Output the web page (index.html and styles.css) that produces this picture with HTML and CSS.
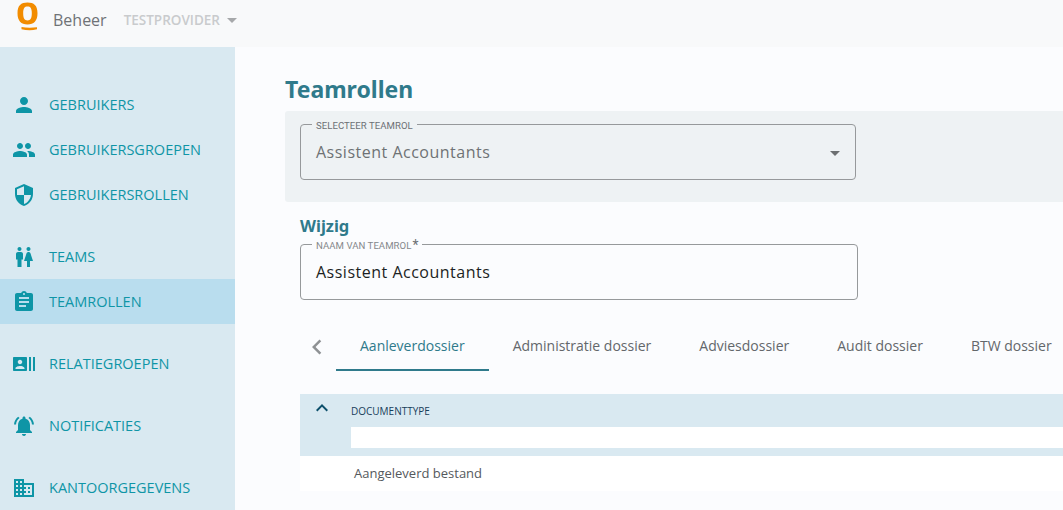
FILE: index.html
```html
<!DOCTYPE html>
<html lang="nl">
<head>
<meta charset="utf-8">
<title>Teamrollen</title>
<link rel="stylesheet" href="styles.css">
</head>
<body>
<header class="topbar">
  <svg class="logo" viewBox="0 0 22 30" width="22" height="30"><path fill="#f28c00" fill-rule="evenodd" d="M10.500 .5c6.500 0 10 2.800 10 10.800 0 7.500-3.500 11.200-10 11.200S.5 18.800.5 11.300C.5 3.300 4 .5 10.500 .5zm0 4c-3 0-4.300 1.800-4.300 6.800s1.300 7.200 4.300 7.200 4.300-2.200 4.300-7.200-1.300-6.800-4.300-6.800z"/><path fill="#f28c00" d="M4.500 25c5 .9 10.500 .9 15.500.2v2.100c-5 1.200-10.500 1.100-15.500-.1z"/></svg>
  <span class="brand">Beheer</span>
  <span class="provider">TESTPROVIDER</span>
  <span class="caret-light"></span>
</header>
<div class="shell">
  <nav class="sidebar">
    <div class="nav-group">
      <a class="nav-item"><svg viewBox="0 0 24 24"><path d="M12 12c2.210 0 4-1.790 4-4s-1.790-4-4-4-4 1.790-4 4 1.790 4 4 4zm0 2c-2.670 0-8 1.340-8 4v2h16v-2c0-2.660-5.330-4-8-4z"/></svg>GEBRUIKERS</a>
      <a class="nav-item"><svg viewBox="0 0 24 24"><path d="M16 11c1.660 0 2.990-1.340 2.990-3S17.660 5 16 5c-1.660 0-3 1.340-3 3s1.340 3 3 3zm-8 0c1.660 0 2.990-1.340 2.990-3S9.660 5 8 5C6.340 5 5 6.340 5 8s1.340 3 3 3zm0 2c-2.330 0-7 1.170-7 3.500V19h14v-2.500c0-2.330-4.670-3.500-7-3.500zm8 0c-.29 0-.62.02-.97.05 1.160.84 1.970 1.970 1.970 3.450V19h6v-2.500c0-2.330-4.670-3.500-7-3.500z"/></svg>GEBRUIKERSGROEPEN</a>
      <a class="nav-item"><svg viewBox="0 0 24 24"><path d="M12 1L3 5v6c0 5.550 3.840 10.740 9 12 5.160-1.260 9-6.450 9-12V5l-9-4zm0 10.990h7c-.53 4.120-3.280 7.790-7 8.940V12H5V6.300l7-3.110v8.800z"/></svg>GEBRUIKERSROLLEN</a>
    </div>
    <div class="nav-group">
      <a class="nav-item"><svg viewBox="0 0 24 24"><path d="M5.500 22v-7.500H4V9c0-1.100.9-2 2-2h3c1.100 0 2 .9 2 2v5.500H9.500V22h-4zM18 22v-6h3l-2.540-7.630C18.180 7.550 17.420 7 16.560 7h-.12c-.86 0-1.630.55-1.900 1.370L12 16h3v6h3zM7.500 6c1.110 0 2-.89 2-2s-.89-2-2-2-2 .89-2 2 .89 2 2 2zm9 0c1.110 0 2-.89 2-2s-.89-2-2-2-2 .89-2 2 .89 2 2 2z"/></svg>TEAMS</a>
      <a class="nav-item active"><svg viewBox="0 0 24 24"><path d="M19 3h-4.180C14.400 1.840 13.300 1 12 1c-1.300 0-2.400.84-2.820 2H5c-1.100 0-2 .9-2 2v14c0 1.100.9 2 2 2h14c1.100 0 2-.9 2-2V5c0-1.100-.9-2-2-2zm-7 0c.55 0 1 .45 1 1s-.45 1-1 1-1-.45-1-1 .45-1 1-1zm2 14H7v-2h7v2zm3-4H7v-2h10v2zm0-4H7V7h10v2z"/></svg>TEAMROLLEN</a>
    </div>
    <div class="nav-group">
      <a class="nav-item"><svg viewBox="0 0 24 24"><path d="M21 5v14h2V5h-2zm-4 14h2V5h-2v14zM14 5H2c-.55 0-1 .45-1 1v12c0 .55.45 1 1 1h12c.55 0 1-.45 1-1V6c0-.55-.45-1-1-1zM8 7.750c1.240 0 2.250 1.010 2.250 2.250S9.240 12.250 8 12.250 5.750 11.240 5.750 10 6.760 7.750 8 7.750zM12.500 17h-9v-.75c0-1.500 3-2.250 4.500-2.250s4.500.75 4.500 2.250V17z"/></svg>RELATIEGROEPEN</a>
    </div>
    <div class="nav-group">
      <a class="nav-item"><svg viewBox="0 0 24 24"><path d="M7.580 4.080L6.150 2.650C3.750 4.480 2.170 7.300 2.030 10.500h2c.15-2.650 1.510-4.970 3.550-6.420zm12.390 6.420h2c-.15-3.200-1.730-6.020-4.120-7.850l-1.420 1.430c2.020 1.450 3.390 3.770 3.540 6.420zM18 11c0-3.070-1.640-5.640-4.500-6.320V4c0-.83-.67-1.500-1.500-1.500s-1.500.67-1.500 1.500v.68C7.630 5.360 6 7.920 6 11v5l-2 2v1h16v-1l-2-2v-5zm-6 11c.14 0 .27-.01.4-.04.65-.14 1.180-.58 1.440-1.180.1-.24.15-.5.15-.78h-4c.01 1.100.9 2 2.010 2z"/></svg>NOTIFICATIES</a>
    </div>
    <div class="nav-group">
      <a class="nav-item"><svg viewBox="0 0 24 24"><path d="M12 7V3H2v18h20V7H12zM6 19H4v-2h2v2zm0-4H4v-2h2v2zm0-4H4V9h2v2zm0-4H4V5h2v2zm4 12H8v-2h2v2zm0-4H8v-2h2v2zm0-4H8V9h2v2zm0-4H8V5h2v2zm10 12h-8v-2h2v-2h-2v-2h2v-2h-2V9h8v10zm-2-8h-2v2h2v-2zm0 4h-2v2h2v-2z"/></svg>KANTOORGEGEVENS</a>
    </div>
  </nav>
  <main class="content">
    <h1 class="title">Teamrollen</h1>
    <section class="select-panel">
      <fieldset class="field field-select">
        <legend>SELECTEER TEAMROL</legend>
        <span class="value muted">Assistent Accountants</span>
        <span class="caret-dark"></span>
      </fieldset>
    </section>
    <section class="edit">
      <h2 class="subtitle">Wijzig</h2>
      <fieldset class="field field-name">
        <legend>NAAM VAN TEAMROL<span class="req">*</span></legend>
        <span class="value">Assistent Accountants</span>
      </fieldset>
      <div class="tabs">
        <svg class="tab-prev" viewBox="0 0 24 24" width="30" height="30"><path d="M15.410 7.410L14 6l-6 6 6 6 1.410-1.410L10.830 12z"/></svg>
        <span class="tab active">Aanleverdossier</span>
        <span class="tab">Administratie dossier</span>
        <span class="tab">Adviesdossier</span>
        <span class="tab">Audit dossier</span>
        <span class="tab">BTW dossier</span>
      </div>
      <div class="table">
        <div class="thead">
          <svg class="sort" viewBox="0 0 24 24" width="24" height="24"><path d="M12 8l-6 6 1.410 1.410L12 10.830l4.590 4.580L18 14z"/></svg>
          <div class="th">
            <span class="th-label">DOCUMENTTYPE</span>
            <div class="filter"></div>
          </div>
        </div>
        <div class="row">Aangeleverd bestand</div>
      </div>
    </section>
  </main>
</div>
</body>
</html>
```
FILE: styles.css
```css
* { box-sizing: border-box; }
html, body { height: 100%; }
body {
  margin: 0;
  width: 1063px;
  height: 510px;
  overflow: hidden;
  background: #fbfcfe;
  font-family: "Open Sans", sans-serif;
  display: flex;
  flex-direction: column;
}
.topbar {
  flex: 0 0 47px;
  display: flex;
  align-items: center;
  background: #f8f9fa;
  padding-left: 17px;
}
.logo { margin-top: -14px; flex: none; }
.brand { font-size: 16px; color: #6f7276; margin-left: 14px; margin-top: -8px; }
.provider { font-size: 13.5px; font-weight: 600; color: #c9cbcd; margin-left: 17px; margin-top: -8px; }
.caret-light {
  margin-left: 7px;
  margin-top: -7px;
  border-left: 5px solid transparent;
  border-right: 5px solid transparent;
  border-top: 5px solid #a6a8aa;
}
.shell { flex: 1; display: flex; min-height: 0; }
.sidebar {
  flex: 0 0 235px;
  background: #d9e9f1;
  padding-top: 35px;
  display: flex;
  flex-direction: column;
  gap: 17px;
}
.nav-item {
  height: 45px;
  display: flex;
  align-items: center;
  gap: 13px;
  padding-left: 12px;
  font-size: 14.5px;
  color: #0f95a6;
}
.nav-item svg { width: 24px; height: 24px; fill: #0e95a6; flex: none; }
.nav-item.active { background: #b9ddee; }
.content { flex: 1; min-width: 0; padding-left: 50px; }
.title {
  margin: 26px 0 0;
  font-family: "Noto Sans", sans-serif;
  font-size: 23px;
  font-weight: 700;
  line-height: 32px;
  color: #2f7a8b;
  height: 38px;
}
.select-panel {
  height: 91px;
  background: #eef2f4;
  border-radius: 3px 0 0 3px;
  padding: 7px 15px 0;
}
.field {
  margin: 0;
  padding: 0 15px;
  border: 1px solid #96999b;
  border-radius: 4px;
  position: relative;
  display: flex;
  align-items: center;
  min-width: 0;
}
.field legend {
  font-family: Roboto, sans-serif;
  font-size: 9.6px;
  line-height: 11px;
  letter-spacing: .04px;
  color: #6c7074;
  padding: 2px 4px 0;
  margin-left: -4px;
}
.field-select { width: 556px; height: 62px; padding-bottom: 7px; }
.field-name { width: 558px; height: 62px; padding-bottom: 7px; }
.field-name legend { color: #85888b; }
.value { font-size: 16px; line-height: 24px; color: #1b1f23; letter-spacing: .5px; }
.value.muted { color: #6e7275; }
.req { font-size: 14px; line-height: 9px; vertical-align: -1px; color: #6c7074; margin-left: 1px; }
.caret-dark {
  position: absolute;
  right: 15px;
  top: 20px;
  border-left: 5px solid transparent;
  border-right: 5px solid transparent;
  border-top: 5px solid #6c6f71;
}
.edit { padding-left: 15px; }
.subtitle {
  margin: 0;
  padding-top: 14px;
  height: 36px;
  font-family: "Noto Sans", sans-serif;
  font-size: 16.5px;
  line-height: 20px;
  font-weight: 700;
  color: #2f7a8b;
}
.tabs { display: flex; align-items: stretch; height: 46px; margin-top: 25px; white-space: nowrap; }
.tab-prev { align-self: center; margin: -3px 4px 0 2px; width: 30px; height: 30px; fill: #8e9194; flex: none; }
.tab {
  padding: 0 24px;
  display: flex;
  align-items: center;
  font-size: 14px;
  color: #63676b;
  padding-bottom: 5px;
}
.tab.active { color: #2f7a8b; border-bottom: 2px solid #2f7a8b; padding-bottom: 3px; }
.table { margin-top: 23px; }
.thead { height: 62px; background: #d9e9f1; display: flex; }
.sort { margin: 2px 0 0 10px; fill: #0d4f6b; flex: none; }
.th { flex: 1; margin-left: 17px; padding-top: 10px; }
.th-label { display: block; font-size: 10px; font-weight: 400; line-height: 14px; color: #17405a; height: 23px; }
.filter { height: 21px; background: #fff; }
.row {
  height: 35px;
  background: #fff;
  padding-left: 54px;
  padding-bottom: 1px;
  display: flex;
  align-items: center;
  font-size: 13px;
  color: #55595d;
}
```
